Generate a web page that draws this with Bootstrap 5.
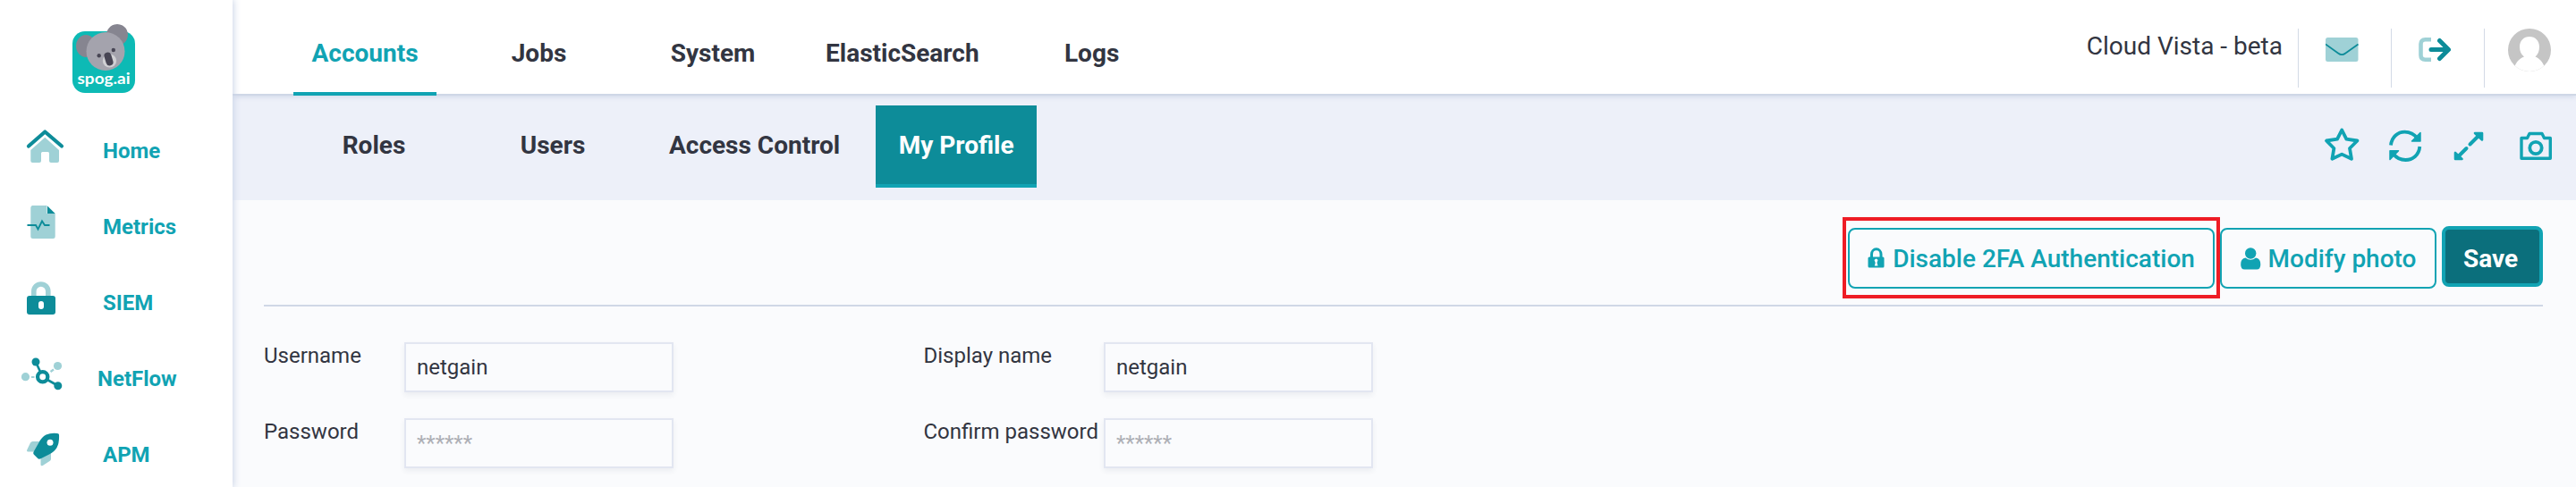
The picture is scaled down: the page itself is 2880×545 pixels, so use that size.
<!DOCTYPE html>
<html lang="en">
<head>
<meta charset="utf-8">
<title>Cloud Vista - My Profile</title>
<link href="https://cdn.jsdelivr.net/npm/bootstrap@5.3.0/dist/css/bootstrap.min.css" rel="stylesheet">
<style>
:root{--teal:#11a3b3;--deep:#0d8c99;--pale:#9fd1d6;--ink:#323541;--rule:#cfd7e6}
body{font-family:Roboto,"Liberation Sans",sans-serif;color:var(--ink);background:#fafbfd;height:545px;overflow:hidden;font-size:24px}
svg{display:block;flex:none}
.side{width:260px;height:545px;background:#fff;box-shadow:0 0 8px 1px #c9d3e6;z-index:3}
.brand-box{height:143px;padding:26px 0 0 80px}
.side-item{height:85px;padding-left:24px;color:var(--teal);font-weight:700;text-decoration:none}
.side-item span{line-height:30px;padding-top:11px;margin-left:43px}
.side-item .wide-label{margin-left:37px}
.topbar{height:107px;background:#fff;border-bottom:2px solid var(--rule);box-shadow:0 1px 6px #cdd5e6;z-index:2}
.tabs-main{padding-left:68px;gap:34.5px}
.tab-main{min-width:160px;height:107px;padding:43px 11.5px 0;line-height:34px;font-size:28px;font-weight:700;color:var(--ink);text-align:center;text-decoration:none;border-bottom:4px solid transparent}
.tab-main.active{color:var(--teal);border-color:var(--teal)}
.site-name{font-size:28px;line-height:34px;padding:35px 17px 0 0}
.top-cell{width:104px;height:66px;margin-top:32px;border-left:1px solid #d3dae6;padding:10px 0 0 30px}
.top-cell.avatar{width:103px;padding:0 0 0 26px}
.subbar{height:117px;background:#edf0f9;padding:11px 26px 0 68px}
.tabs-sub{gap:20px}
.tab-sub{min-width:180px;height:92px;padding:28px 20px 0;line-height:34px;font-size:28px;font-weight:700;color:var(--ink);text-align:center;text-decoration:none;border-bottom:4px solid transparent}
.tab-sub.active{background:var(--deep);color:#fff;border-color:var(--teal)}
.page{padding:29px 37px 0 35px}
.actions{height:90px;border-bottom:2px solid var(--rule);gap:6px}
.act{height:68px;margin-top:2px;border:2px solid var(--teal);border-radius:8px;background:transparent;color:var(--teal);font-size:28px;font-weight:500;padding:0;white-space:nowrap;line-height:34px}
.act span{padding-top:2px}
.act-2fa{width:410px}.act-photo{width:242px}
.act-save{width:113px;margin-top:0;border-width:4px;background:#0b6f7c;color:#fff;font-weight:700;padding:5px 4px 0 0}
.callout-box{position:absolute;left:-6px;right:-6px;top:-10px;bottom:-11px;border:4px solid #ee1c25;pointer-events:none}
.fields{display:grid;grid-template-columns:157px 301px 481px 301px;row-gap:29px;padding-top:40px}
.fields label{line-height:30px}
.fields .second{padding-left:279.500px;white-space:nowrap}
.field{height:56px;border:2px solid #e2e6f1;border-radius:0;background:#fafbfd;color:var(--ink);font-size:24px;padding:0 12px;box-shadow:0 3px 6px rgba(40,50,90,.07)}
.field::placeholder{color:#adafb5;opacity:1}
</style>
</head>
<body>
<div class="d-flex">
<nav class="side position-relative flex-shrink-0">
  <div class="brand-box">
    <svg width="72" height="80" viewBox="80 26 72 80">
      <rect x="81" y="35" width="70" height="69" rx="14" fill="#0dbab5"/>
      <ellipse cx="96" cy="51.500" rx="11" ry="12.500" fill="#868590"/>
      <ellipse cx="131" cy="39" rx="12" ry="12" fill="#868590" transform="rotate(30 131 39)"/>
      <circle cx="118" cy="57.500" r="21.500" fill="#a4a3ad"/>
      <ellipse cx="122.500" cy="68" rx="7.700" ry="7.500" fill="#d0d0d4"/>
      <rect x="117.500" y="58.500" width="8" height="15" rx="4" fill="#474554" transform="rotate(-17 121.500 66)"/>
      <circle cx="110.700" cy="62.200" r="2.200" fill="#474554"/><circle cx="126.800" cy="56" r="2.200" fill="#474554"/>
      <text x="86.500" y="94" textLength="59" lengthAdjust="spacingAndGlyphs" font-family="Lato, sans-serif" font-weight="700" font-size="17" fill="#fff">spog.ai</text>
    </svg>
  </div>
  <a class="side-item d-flex align-items-start" href="#">
    <svg width="48" height="42" viewBox="24 143 48 42"><path d="M34.300 168 50.300 153.700 66 168V180q0 2-2 2H57q-2 0-2-2V171.500q0-1.500-1.500-1.500H47.500q-1.500 0-1.500 1.500V180q0 2-2 2H36.300q-2 0-2-2Z" fill="#9fd1d6"/><path d="M32 163.500 50.300 147.500 69 163.500" fill="none" stroke="#0d8c99" stroke-width="4.200" stroke-linecap="round" stroke-linejoin="round"/></svg>
    <span>Home</span></a>
  <a class="side-item d-flex align-items-start" href="#">
    <svg width="48" height="42" viewBox="24 228 48 42"><path d="M36.300 230H52.500V239H61.700V264.500q0 2.500-2.500 2.500H36.800q-2.500 0-2.500-2.500V232.500q0-2.500 2-2.500Z" fill="#9fd1d6"/><path d="M53 230.500 61.700 239H53Z" fill="#0d8c99"/><path d="M30.500 252H40L42.500 256.500 47 247.500 50 252H55.500" fill="none" stroke="#0d8c99" stroke-width="1.900" stroke-linejoin="miter"/></svg>
    <span>Metrics</span></a>
  <a class="side-item d-flex align-items-start" href="#">
    <svg width="48" height="42" viewBox="24 313 48 42"><path d="M37.800 332V326a8 8 0 0 1 16 0V332" fill="none" stroke="#9fd1d6" stroke-width="5.600"/><rect x="30" y="331" width="32" height="21" rx="3" fill="#0d8c99"/><rect x="43" y="337" width="6" height="9" rx="3" fill="#fff"/></svg>
    <span>SIEM</span></a>
  <a class="side-item d-flex align-items-start" href="#">
    <svg width="48" height="42" viewBox="24 398 48 42"><path d="M35 422H38.500M56.500 416 60 413.500" stroke="#9fd1d6" stroke-width="2.200"/><circle cx="28.500" cy="421.700" r="4.600" fill="#9fd1d6"/><circle cx="64.500" cy="409.500" r="4.600" fill="#9fd1d6"/><path d="M40 405 45 416M53 425 64.500 431.500" stroke="#0d8c99" stroke-width="2.600"/><circle cx="40" cy="405" r="4.500" fill="#0d8c99"/><circle cx="64.800" cy="431.700" r="4.500" fill="#0d8c99"/><circle cx="47.700" cy="421.700" r="5.600" fill="#fff" stroke="#0d8c99" stroke-width="4.300"/></svg>
    <span class="wide-label">NetFlow</span></a>
  <a class="side-item d-flex align-items-start" href="#">
    <svg width="48" height="42" viewBox="24 483 48 42"><path d="M44 494H36.500q-1.500 0-2.500 1.500L30.200 503.500q-.7 2 1.300 2H39ZM57 507V513.500q0 1.500-1.500 2.500L47.800 521q-2.300 1-2.300-1.300V512.500Z" fill="#9fd1d6"/><path d="M66 486.500q.5 9-2.500 14.500-3 5-8.500 7.500L45.500 513.300q-2 1-3.500-.5L38 508.800q-1.300-1.500-.3-3.300L43 496q3.500-7 8.500-9.500 5.500-2.300 12.500-1.500 2 .1 2 1.500Z" fill="#0d8c99"/><circle cx="56" cy="495.300" r="3.500" fill="#fff"/></svg>
    <span>APM</span></a>
</nav>

<main class="flex-grow-1">
  <header class="topbar position-relative d-flex justify-content-between">
    <div class="tabs-main d-flex">
      <a class="tab-main active" href="#">Accounts</a>
      <a class="tab-main" href="#">Jobs</a>
      <a class="tab-main" href="#">System</a>
      <a class="tab-main" href="#">ElasticSearch</a>
      <a class="tab-main" href="#">Logs</a>
    </div>
    <div class="d-flex">
      <div class="site-name">Cloud Vista - beta</div>
      <div class="top-cell"><svg width="37" height="27" viewBox="0 0 37 27"><rect width="36.500" height="27" rx="2.500" fill="#9fd1d6"/><path d="M0 7.500 14 17.500Q18.200 20.800 22.400 17.500L36.500 7.500" fill="none" stroke="#0d8c99" stroke-width="1.800"/></svg></div>
      <div class="top-cell"><svg width="37" height="27" viewBox="0 0 37 27"><path d="M14 2.300H7.500q-5 0-5 5V19.700q0 5 5 5H14" fill="none" stroke="#9fd1d6" stroke-width="4.600"/><path d="M14 13.500H33M23.500 3.500 33.500 13.500 23.500 23.500" fill="none" stroke="#0d8c99" stroke-width="5" stroke-linecap="round" stroke-linejoin="round"/></svg></div>
      <div class="top-cell avatar"><svg width="48" height="48" viewBox="0 0 48 48"><defs><clipPath id="face"><circle cx="24" cy="24" r="24"/></clipPath></defs><g clip-path="url(#face)"><rect width="48" height="48" fill="#c5c5c5"/><path d="M24 9C17.500 9 13 13.500 13 20.500 13 25 14.500 29 18 31.500 13 33 9 38 7.500 42L3 52H45L40.500 42C39 38 35 33 30.500 31.500 33.500 29 35 25 35 20.500 35 13.500 30.500 9 24 9Z" fill="#fff"/></g></svg></div>
    </div>
  </header>

  <section class="subbar d-flex justify-content-between">
    <div class="tabs-sub d-flex">
      <a class="tab-sub" href="#">Roles</a>
      <a class="tab-sub" href="#">Users</a>
      <a class="tab-sub" href="#">Access Control</a>
      <a class="tab-sub active" href="#">My Profile</a>
    </div>
    <div class="d-flex pt-4">
      <svg width="256" height="40" viewBox="2598 142 256 40" fill="none" stroke="#11a3b3" stroke-width="3.800" stroke-linejoin="round" stroke-linecap="round">
        <path d="M2618.200 145.500 2623.300 155.700 2635.500 157.500 2627 166 2629 177.800 2618.200 172.600 2607.400 177.800 2609.400 166 2601 157.500 2613.100 155.700Z"/>
        <path d="M2673 162.500C2674 153 2681 147.700 2688.500 147.700 2694 147.700 2699 150 2703 155M2705.300 164C2704.500 174 2697 179 2689.500 179 2684 179 2679 176.500 2675.500 172" stroke-linecap="butt"/>
        <path d="M2706 148.500V158H2696.500ZM2672 178.500V168.800H2681.500Z" fill="#11a3b3" stroke-width="1.500"/>
        <path d="M2761.500 161.500 2771 152M2757.500 166 2748 175.500" stroke-width="4"/>
        <path d="M2767 149H2775V156.500ZM2745 171V178H2752.500Z" fill="#11a3b3" stroke-width="2.600"/>
        <path d="M2819 154.500H2825.500L2828 149.500H2842L2844.500 154.500H2851.300V177.300H2819Z" stroke-width="3.400"/><circle cx="2835" cy="165.500" r="6.700"/>
      </svg>
    </div>
  </section>

  <section class="page">
    <div class="actions d-flex justify-content-end align-items-start">
      <div class="position-relative">
        <button class="act act-2fa d-flex align-items-center justify-content-center"><svg class="me-2" width="20" height="24" viewBox="0 0 20 24"><path d="M4.500 11V7.500a5 5.500 0 0 1 10.500 0V11" fill="none" stroke="#11a3b3" stroke-width="3"/><rect x=".5" y="10.500" width="18" height="12" rx="1.500" fill="#11a3b3"/><path d="M7.500 14Q9.700 11 11.500 14L10.500 17 11.500 20.500H7.800L8.700 17Z" fill="#fafbfd"/></svg><span>Disable 2FA Authentication</span></button>
        <span class="callout-box"></span>
      </div>
      <button class="act act-photo d-flex align-items-center justify-content-center"><svg class="me-2" width="23" height="26" viewBox="0 0 23 26"><circle cx="11.200" cy="7.500" r="6.200" fill="#11a3b3"/><path d="M5.500 12.500Q11.200 17 17 12.500 22.300 13 22.300 20 22.300 25.500 18 25.500H4.500Q.2 25.500.2 20 .2 13 5.500 12.500Z" fill="#11a3b3"/></svg><span>Modify photo</span></button>
      <button class="act act-save">Save</button>
    </div>
    <form class="fields">
      <label for="user">Username</label>
      <input id="user" class="form-control field" value="netgain">
      <label class="second" for="display">Display name</label>
      <input id="display" class="form-control field" value="netgain">
      <label for="pass">Password</label>
      <input id="pass" class="form-control field" placeholder="******">
      <label class="second" for="confirm">Confirm password</label>
      <input id="confirm" class="form-control field" placeholder="******">
    </form>
  </section>
</main>
</div>
<script src="https://cdn.jsdelivr.net/npm/bootstrap@5.3.0/dist/js/bootstrap.bundle.min.js"></script>
</body>
</html>
